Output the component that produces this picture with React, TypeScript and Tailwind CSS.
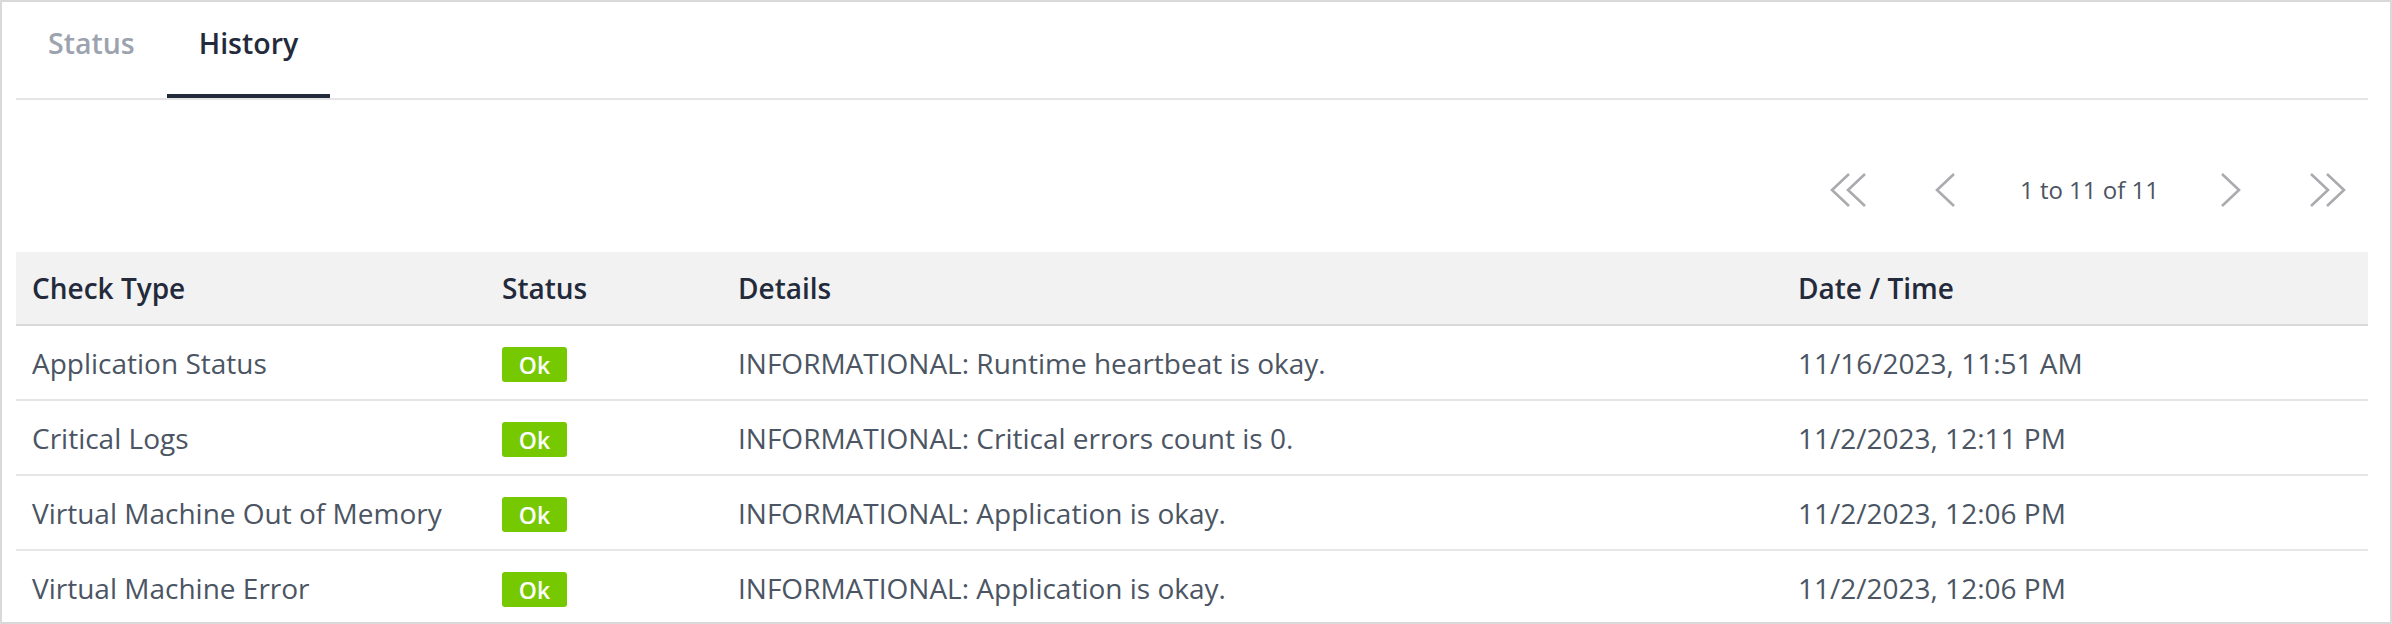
import React from "react";

const rows = [
  { type: "Application Status", details: "INFORMATIONAL: Runtime heartbeat is okay.", date: "11/16/2023, 11:51 AM" },
  { type: "Critical Logs", details: "INFORMATIONAL: Critical errors count is 0.", date: "11/2/2023, 12:11 PM" },
  { type: "Virtual Machine Out of Memory", details: "INFORMATIONAL: Application is okay.", date: "11/2/2023, 12:06 PM" },
  { type: "Virtual Machine Error", details: "INFORMATIONAL: Application is okay.", date: "11/2/2023, 12:06 PM" },
];

function DoubleLeft() {
  return (
    <svg width="36" height="34" viewBox="0 0 36 34" fill="none" stroke="#a9abae" strokeWidth="2.6">
      <polyline points="19,1 2,17 19,33" />
      <polyline points="35,1 18,17 35,33" />
    </svg>
  );
}
function DoubleRight() {
  return (
    <svg width="36" height="34" viewBox="0 0 36 34" fill="none" stroke="#a9abae" strokeWidth="2.6">
      <polyline points="1,1 18,17 1,33" />
      <polyline points="17,1 34,17 17,33" />
    </svg>
  );
}
function Left() {
  return (
    <svg width="20" height="34" viewBox="0 0 20 34" fill="none" stroke="#a9abae" strokeWidth="2.6">
      <polyline points="19,1 2,17 19,33" />
    </svg>
  );
}
function Right() {
  return (
    <svg width="20" height="34" viewBox="0 0 20 34" fill="none" stroke="#a9abae" strokeWidth="2.6">
      <polyline points="1,1 18,17 1,33" />
    </svg>
  );
}

export default function App() {
  return (
    <div className="w-[2392px] h-[624px] overflow-hidden border-2 border-[#d9d9d9] bg-white pl-[14px] pr-[22px] font-['Open_Sans',sans-serif]">
      <div className="flex border-b-2 border-[#e5e5e5]">
        <div className="px-8 pt-[22px] pb-[32px] border-b-4 border-transparent text-[28.5px] leading-[38px] font-semibold text-[#9ca3af]">
          Status
        </div>
        <div className="px-8 pt-[22px] pb-[32px] border-b-4 border-[#232a3b] text-[28.5px] leading-[38px] font-semibold text-[#232a3b]">
          History
        </div>
      </div>

      <div className="mt-[72px] mb-[44px] h-[36px] flex items-center justify-end pr-[22px]">
        <DoubleLeft />
        <div className="ml-[69px]">
          <Left />
        </div>
        <span className="ml-[65px] text-[24px] leading-[34px] text-[#4b5563]">1 to 11 of 11</span>
        <div className="ml-[62px]">
          <Right />
        </div>
        <div className="ml-[69px]">
          <DoubleRight />
        </div>
      </div>

      <div className="grid grid-cols-[470px_236px_1060px_586px] h-[74px] items-center bg-[#f2f2f2] border-b-2 border-[#d9d9d9] text-[28px] font-[650] text-[#232a3b]">
        <div className="pl-4">Check Type</div>
        <div className="pl-4">Status</div>
        <div className="pl-4">Details</div>
        <div className="pl-4">Date / Time</div>
      </div>
      {rows.map((r, i) => (
        <div
          key={i}
          className="grid grid-cols-[470px_236px_1060px_586px] h-[75px] items-center border-b-2 border-[#e6e6e6] text-[28px] text-[#4b5563]"
        >
          <div className="pl-4">{r.type}</div>
          <div className="pl-4">
            <span className="inline-flex h-[35px] w-[65px] items-center justify-center rounded-[3px] bg-[#76c900] text-[23px] font-semibold text-white">
              Ok
            </span>
          </div>
          <div className="pl-4">{r.details}</div>
          <div className="pl-4">{r.date}</div>
        </div>
      ))}
    </div>
  );
}
